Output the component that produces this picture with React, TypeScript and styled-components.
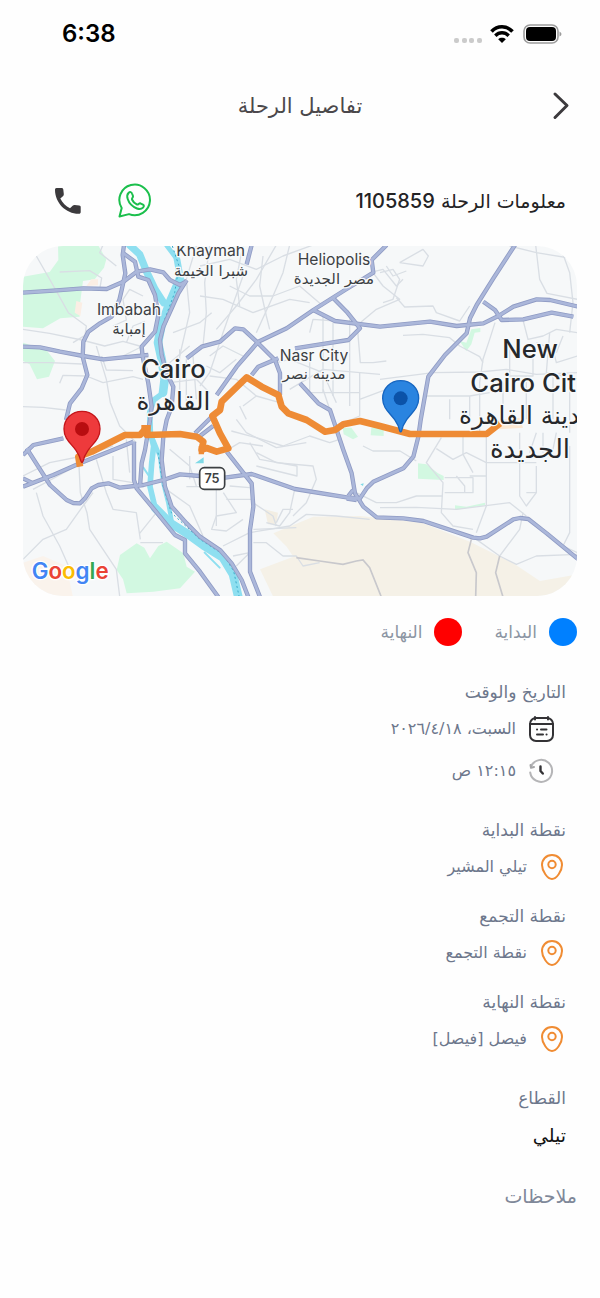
import React from "react";
import styled, { createGlobalStyle } from "styled-components";

const GlobalStyle = createGlobalStyle`
  *, *::before, *::after { box-sizing: border-box; }
  body {
    margin: 0;
    background: #fefefe;
    color: #6d778c;
    font-family: "DejaVu Sans", "Noto Sans", sans-serif;
  }
  h1, h2, p { margin: 0; font-weight: 400; }
`;

const Screen = styled.div`
  padding-bottom: 85px;
`;

const StatusBar = styled.div`
  direction: ltr;
  height: 68px;
  padding: 0 38px 0 62px;
  display: flex;
  align-items: center;
  justify-content: space-between;
`;

const Clock = styled.time`
  font: 600 24px/32px Inter, sans-serif;
  color: #000;
`;

const StatusIcons = styled.div`
  display: flex;
  align-items: center;
  gap: 8px;
`;

const Header = styled.header`
  height: 76px;
  padding: 0 28px;
  display: grid;
  grid-template-columns: 24px 1fr 24px;
  align-items: center;
`;

const BackButton = styled.button`
  width: 24px;
  height: 32px;
  padding: 0;
  border: 0;
  background: none;
  display: flex;
  align-items: center;
  justify-content: center;
`;

const Title = styled.h1`
  font-size: 21px;
  line-height: 32px;
  text-align: center;
  color: #4b484b;
`;

const InfoRow = styled.div`
  margin: 28px 0 16px;
  height: 58px;
  padding: 0 34px 0 50px;
  display: flex;
  align-items: center;
  justify-content: space-between;
`;

const InfoTitle = styled.h2`
  font-size: 19px;
  line-height: 32px;
  color: #232325;
`;

const TripNumber = styled.span`
  font: 500 20px/32px Inter, sans-serif;
`;

const Contacts = styled.div`
  display: flex;
  align-items: center;
  gap: 31px;
`;

const ContactLink = styled.a`
  display: flex;
  width: 36px;
  height: 36px;
  align-items: center;
  justify-content: center;
`;

const MapCard = styled.div`
  margin: 0 23px;
  border-radius: 40px;
  overflow: hidden;
  direction: ltr;
`;

const MapSvg = styled.svg`
  display: block;
  width: 100%;
  height: auto;
  background: #f6f8f9;
`;

const Legend = styled.ul`
  list-style: none;
  margin: 0;
  height: 72px;
  padding: 0 23px;
  display: flex;
  align-items: center;
  gap: 32px;
`;

const LegendItem = styled.li`
  display: flex;
  align-items: center;
  gap: 12px;
  font-size: 17px;
  line-height: 32px;
  color: #8c95a3;
`;

const Dot = styled.span<{ $color: string }>`
  width: 28px;
  height: 28px;
  border-radius: 50%;
  background: ${(p) => p.$color};
`;

const Details = styled.main`
  padding: 8px 34px 0;
  display: flex;
  flex-direction: column;
  gap: 22px;
`;

const Points = styled.div`
  display: flex;
  flex-direction: column;
  gap: 12px;
`;

const Heading = styled.h2`
  font-size: 17px;
  line-height: 32px;
`;

const Row = styled.div<{ $inset?: boolean }>`
  height: 42px;
  padding-right: ${(p) => (p.$inset ? "11px" : "0")};
  display: flex;
  align-items: center;
  gap: 11px;
`;

const RowText = styled.p`
  font-size: 16px;
  line-height: 32px;
`;

const SectorValue = styled.p`
  font-size: 19px;
  line-height: 42px;
  color: #111;
`;

const Notes = styled.h2`
  padding: 24px 23px 0;
  font-size: 19px;
  line-height: 32px;
  color: #7f8899;
`;

const minorRoads = [
  "M40 30L96 128L136 200L190 240L186 268L150 290",
  "M110 78L200 74L236 96L230 130",
  "M0 250L80 262L176 282L245 300L300 286L350 300",
  "M0 350H80L176 354",
  "M110 412L120 388L190 390L240 410L330 392L360 400",
  "M0 482L60 484L128 492",
  "M220 300L250 400L262 470L290 540L340 590",
  "M236 330L250 372L330 374",
  "M270 240L310 222L300 160L320 130L360 150",
  "M280 60L230 20L240 -3",
  "M310 290L330 240L366 226M300 330L360 300",
  "M520 0L490 100L500 200L470 330",
  "M560 0L545 110L550 200L540 300",
  "M450 260L530 230L566 200",
  "M440 350L500 300M440 410L520 400L560 440",
  "M470 310L470 460M490 340V470M510 330L520 460",
  "M531 60L620 40L700 70L780 30L870 -3",
  "M760 -3L700 100L640 180L580 250",
  "M720 30L710 120L730 210L740 250",
  "M531 150L600 160L690 200L800 160L860 170",
  "M660 90L600 260L560 380L531 420",
  "M620 120L680 150L750 150L830 120L900 180",
  "M800 -3L780 80L750 150L700 260",
  "M660 -3L640 100L650 180",
  "M560 330L600 300L660 330M550 360L590 380L640 340",
  "M560 390L640 400L700 450L660 480",
  "M700 450L770 470M650 480L670 520",
  "M760 350L800 340L900 380L940 470",
  "M860 260L870 220L940 225M860 320V440H1010",
  "M900 200V440M930 230V450M980 220V480",
  "M800 430L900 370L1071 385M900 430L930 520",
  "M1004 254L1012 350L1050 350L1090 345",
  "M1010 380V510L940 540M1010 460L1090 430",
  "M1000 240L1060 190L1130 160L1080 120L1050 80",
  "M1040 80L1080 70L1120 120L1140 100M1090 60L1110 90L1150 75",
  "M1071 80L1110 70L1130 100L1110 160L1080 170",
  "M1130 50L1200 10L1216 30L1200 60L1130 50",
  "M1120 155L1145 183L1230 180L1240 200L1310 225L1340 180",
  "M1140 268L1200 265L1280 275L1310 300L1370 332L1380 350",
  "M1460 0L1540 20L1663 40M1538 -3L1550 100L1572 142L1663 160",
  "M1610 -3L1640 80L1650 170L1640 260",
  "M1071 400L1230 380L1370 378L1450 370L1540 385L1663 380",
  "M1416 230L1400 280L1380 340L1370 410V560",
  "M1500 222L1515 280L1560 270L1600 250L1663 260",
  "M1460 290V390H1530V310M1580 260L1570 380L1620 390",
  "M1540 290L1590 310L1600 350L1663 330M1620 270L1600 320",
  "M1200 450H1340L1400 440M1280 460V520M1340 450V520",
  "M1440 410V520M1510 390V520M1590 390V520M1640 390V560",
  "M0 690L80 650L180 630L270 600M30 730L160 660",
  "M40 740L60 810L110 900L150 990",
  "M0 940L60 880L130 850L180 780L210 740",
  "M168 660L172 740L192 800L200 850L240 910L280 970L290 1050",
  "M220 640L250 740L270 790L340 800L352 880",
  "M270 630V700L330 710M310 580L320 680",
  "M440 610L500 660L520 720M430 730L500 780L540 870",
  "M350 862L400 800M352 890L420 890",
  "M490 722H580V840M500 630V700",
  "M540 600L600 620L650 590L720 600",
  "M625 555L700 575L780 600L860 570L920 590L950 580",
  "M640 520L670 560L760 605L850 590",
  "M700 620L760 650L870 660L880 700L850 770L810 810",
  "M680 590L710 640L822 660V690L700 660",
  "M815 730L800 800L770 840L730 830",
  "M601 740L640 800L580 810L566 850L610 855L660 820",
  "M620 720L680 725M610 760L690 760",
  "M600 900L680 860L800 840L850 805L940 810L1040 820",
  "M691 850L820 845M630 930L680 920M640 960L680 920",
  "M691 890L730 890L780 930L820 930L840 960L890 950",
  "M760 830L780 790L810 790M690 770L750 810L760 840",
  "M1000 740L1060 770L1120 770L1180 750H1260",
  "M1020 600L1050 615H1131L1180 645",
  "M1071 785L1180 784L1300 790L1460 770L1510 810",
  "M1255 575L1210 650L1260 710L1255 800L1290 840L1350 850",
  "M1240 608L1290 640L1330 620L1390 650",
  "M1320 570V625L1350 680M1340 690H1390",
  "M1390 565V780L1360 860",
  "M1265 695H1350V740H1265M1300 690L1325 720V740",
  "M1390 650H1540M1490 560V750L1510 780L1540 740V660",
  "M1510 740H1540M1640 600V860L1620 900L1663 920",
  "M1360 880L1430 930L1480 955L1540 930L1663 925",
  "M1500 800L1490 850L1430 930",
  "M1540 560L1520 620M1560 560V620M1600 560L1590 610",
];

const highways = [
  "M0 140L91 134L181 127L251 129L301 107L341 77L381 70L421 79L441 102L471 117L489 107",
  "M303 -3L299 27L307 82L296 132L289 162L266 212L231 232L196 257L181 287L179 332L193 387L176 427L141 472L129 522",
  "M301 22L336 47L346 92L376 102L396 147L406 207",
  "M0 302L51 304L111 317L181 330L241 340L301 334L376 327",
  "M491 102L466 142L446 187L421 242L411 282L416 327L431 382L451 422L446 482L431 522L421 572L416 642L426 722L446 782L491 832L531 872L591 912L626 952L656 1002L676 1053",
  "M406 207L396 257L356 302L359 332L376 412L386 482L381 522L366 612L356 652L351 722",
  "M333 587V702L341 727L391 787L456 867L486 882V922L531 977L586 1053",
  "M0 627L31 597L121 577",
  "M0 722L91 687L171 652L331 587M0 697L31 712",
  "M11 607L46 662L81 717L131 762L151 771L171 772L186 757L206 727L226 717L256 712L291 725L361 717L421 702L471 685L531 690L606 695L686 684L816 729L971 754L1011 757L1031 727L1051 707L1141 667L1171 632L1186 572L1193 522L1216 392L1266 327L1331 262L1341 217L1361 177L1411 97L1476 -3",
  "M491 337L536 302L591 287L636 247L661 250L701 287L756 342L771 382L771 447",
  "M581 447L641 362L706 287L791 247L871 192L966 132L1051 80L1046 42L1091 -3",
  "M871 192L936 225L1071 242L1221 227L1301 240L1381 232L1426 210L1471 182L1541 160L1581 162L1666 182",
  "M931 157L971 197L1011 247L976 282L911 292L816 307",
  "M686 387L706 362L766 337",
  "M831 412L886 472L921 492L931 522L961 612L986 682L996 742L1021 782L1061 814L1141 817L1201 825L1351 875L1371 877L1391 872L1471 820L1491 816L1516 819L1571 862L1666 940",
  "M976 750L990 732M971 758L1001 762",
  "M611 617L686 712L691 782L681 852V977L711 1053",
  "M1381 167L1416 192L1436 222L1501 220L1586 200L1651 212",
  "M686 -3L671 55",
  "M516 562L566 512M531 570L570 540",
];

const route =
  "M171 662L166 632L206 617L306 567L351 567L366 550L371 567L471 564L521 572L541 587L536 612L551 606L581 617L616 607L591 562L568 510L591 492L596 467L671 394L716 422L766 447L776 482L796 502L851 522L906 557L936 552L961 535L1011 525L1071 540L1161 564H1391L1431 532";

const mapLabels: { text: string; x: number; y: number; size: number; arabic?: boolean; start?: boolean }[] = [
  { text: "Khaymah", x: 563, y: 29, size: 47 },
  { text: "شبرا الخيمة", x: 564, y: 90, size: 45, arabic: true },
  { text: "Imbabah", x: 318, y: 207, size: 47 },
  { text: "إمبابة", x: 318, y: 265, size: 45, arabic: true },
  { text: "Cairo", x: 451, y: 395, size: 77 },
  { text: "القاهرة", x: 451, y: 492, size: 74, arabic: true },
  { text: "Heliopolis", x: 933, y: 57, size: 47 },
  { text: "مصر الجديدة", x: 933, y: 114, size: 45, arabic: true },
  { text: "Nasr City", x: 873, y: 344, size: 47 },
  { text: "مدينه نصر", x: 873, y: 400, size: 45, arabic: true },
  { text: "New", x: 1521, y: 337, size: 77 },
  { text: "Cairo City", x: 1342, y: 437, size: 77, start: true },
  { text: "مدينة القاهرة", x: 1308, y: 533, size: 74, arabic: true, start: true },
  { text: "الجديدة", x: 1521, y: 637, size: 78, arabic: true },
];

const MapLabel = styled.text<{ $arabic?: boolean; $large?: boolean }>`
  font-family: ${(p) => (p.$arabic ? '"DejaVu Sans"' : "Inter")}, sans-serif;
  font-weight: ${(p) => (p.$large && !p.$arabic ? 500 : 400)};
  fill: ${(p) => (p.$large ? "#26282b" : "#3c4043")};
  stroke: #f8fafb;
  stroke-width: 8px;
  stroke-linejoin: round;
  paint-order: stroke;
`;

const GoogleMark = styled.text`
  font: 600 67px Inter, sans-serif;
  stroke: #fff;
  stroke-width: 8px;
  paint-order: stroke;
`;

const ShieldText = styled.text`
  font: 600 38px Inter, sans-serif;
  fill: #3c4043;
`;

function MapPin({ x, y, fill, edge, dot }: { x: number; y: number; fill: string; edge: string; dot: string }) {
  return (
    <g transform={`translate(${x} ${y})`}>
      <path
        d="M0 -53C-31 -53 -54 -30 -54 0C-54 30 -33 43 -18 64C-9 77 -5 86 -3 97Q0 104 3 97C5 86 9 77 18 64C33 43 54 30 54 0C54 -30 31 -53 0 -53Z"
        fill={fill}
        stroke={edge}
        strokeWidth="4"
      />
      <circle r="21" fill={dot} />
    </g>
  );
}

function TripMap() {
  return (
    <MapSvg viewBox="0 0 1662 1050" role="img" aria-label="خريطة الرحلة">
      <g fill="#d2f8e1">
        <path d="M105 -3H225L250 40L243 65L215 100L180 105L172 165L170 212L112 217L60 247L0 242V92L80 78L106 42Z" />
        <path d="M0 290L70 312L96 345L78 392L42 400L20 355L0 345Z" />
        <path d="M291 927L341 892L364 905L381 937L406 900L431 887L481 922L491 962L516 977L471 1027L391 1037L311 1042L300 1000L281 972Z" />
        <path d="M959 545L985 545L1005 572L990 580L962 565ZM1045 545H1082V570L1043 568Z" />
        <path d="M1185 652L1210 655L1245 682L1262 690V702L1185 698ZM1296 778L1330 782L1386 770V778L1296 792Z" />
        <path d="M1310 285L1330 290L1345 250L1372 246V258L1355 260L1345 295L1330 315Z" />
      </g>
      <path d="M751 862L871 812L1011 810L1131 822L1201 832L1341 887L1471 952L1551 1005L1663 985V1053H751L711 970L811 932L791 902Z" fill="#f5f1e7" />
      <path d="M0 950L60 930L130 960L150 1053H0Z" fill="#faf3ec" />
      <path d="M725 790L765 800L760 835L735 835Z" fill="#f3eee3" />
      <path d="M1410 525L1490 515L1500 545L1430 550Z" fill="#fce8d2" />
      <path d="M160 165L178 170L172 210L155 200ZM205 100L225 100L225 118L190 120Z" fill="#fbeee4" />

      <g fill="none" stroke="#8edff0" strokeLinecap="round" strokeLinejoin="round">
        <path d="M320 -3L350 25L372 80L396 130L422 170" strokeWidth="22" />
        <path d="M430 -3L462 40" strokeWidth="14" />
        <path d="M462 40L472 95" strokeWidth="20" />
        <path d="M470 100L440 170L415 240L405 290L416 340L425 400L420 440" strokeWidth="26" />
        <path d="M422 440L392 462L380 500L382 560L392 600L386 652L381 722L396 785" strokeWidth="17" />
        <path d="M391 582L411 632L421 712L436 772L446 825" strokeWidth="13" />
        <path d="M396 785L440 830L491 862L541 898L600 935L630 985L646 1053" strokeWidth="26" />
        <path d="M545 920L590 965M361 665L378 690" strokeWidth="6" />
      </g>
      <path d="M448 0L468 60L455 140L425 220L412 270M405 620L420 720L445 800L531 880L600 925L632 975L648 1050" fill="none" stroke="#3aa9c9" strokeWidth="3" strokeDasharray="6 8" />
      <path d="M516 652L542 634V652ZM1012 715L1022 712L1020 720Z" fill="#7fd9e6" />

      <g fill="none" stroke="#d9dee4" strokeWidth="4" strokeLinejoin="round">
        {minorRoads.map((d) => (
          <path key={d} d={d} />
        ))}
      </g>
      <path d="M820 935L890 945L960 955L1000 945L1020 942L1040 965L1075 1053M1345 880L1335 920L1360 980L1358 1053M1430 930L1418 980L1440 1053" fill="none" stroke="#c8c8cc" strokeWidth="5" />

      <g fill="none" strokeLinejoin="round">
        <g stroke="#8f9bc4" strokeWidth="13">
          {highways.map((d) => (
            <path key={d} d={d} />
          ))}
        </g>
        <g stroke="#abb7da" strokeWidth="8">
          {highways.map((d) => (
            <path key={d} d={d} />
          ))}
        </g>
      </g>

      <path d={route} fill="none" stroke="#ee8b35" strokeWidth="20" strokeLinejoin="round" />
      <path d="M535 600V625M355 545H375V575" fill="none" stroke="#ee8b35" strokeWidth="16" />

      <rect x="530" y="665" width="75" height="65" rx="14" fill="#fff" stroke="#3c4043" strokeWidth="5" />
      <ShieldText x="567" y="711" textAnchor="middle">75</ShieldText>

      {mapLabels.map((l) => (
        <MapLabel
          key={l.text}
          x={l.x}
          y={l.y}
          fontSize={l.size}
          textAnchor={l.start ? "start" : "middle"}
          $arabic={l.arabic}
          $large={l.size > 50}
        >
          {l.text}
        </MapLabel>
      ))}

      <MapPin x={177} y={549} fill="#ee3a3c" edge="#c4161a" dot="#b80d10" />
      <MapPin x={1133} y={457} fill="#2a84e0" edge="#1565c0" dot="#0b52a8" />

      <GoogleMark x="26" y="998">
        <tspan fill="#4285f4">G</tspan>
        <tspan fill="#ea4335">o</tspan>
        <tspan fill="#fbbc04">o</tspan>
        <tspan fill="#4285f4">g</tspan>
        <tspan fill="#34a853">l</tspan>
        <tspan fill="#ea4335">e</tspan>
      </GoogleMark>
    </MapSvg>
  );
}

function LocationIcon() {
  return (
    <svg width="28" height="28" viewBox="0 0 28 28" fill="none" stroke="#f08c33" strokeWidth="2" aria-hidden="true">
      <path d="M14 2C8 2 4 6.500 4 12C4 18 9.500 26 14 26C18.500 26 24 18 24 12C24 6.500 20 2 14 2Z" />
      <circle cx="14" cy="11.500" r="3.700" />
    </svg>
  );
}

function CalendarIcon() {
  return (
    <svg width="28" height="28" viewBox="0 0 28 28" fill="none" stroke="#333235" strokeWidth="2" strokeLinecap="round" aria-hidden="true">
      <rect x="3" y="3" width="23" height="23" rx="6" />
      <path d="M3 9H26M8 2V4.500M21 2V4.500" />
      <path d="M14 14.500H19.500M10 19.500H16" />
      <path d="M10 14.500H10.100M19.500 19.500H19.600" />
    </svg>
  );
}

function ClockIcon() {
  return (
    <svg width="28" height="28" viewBox="0 0 28 28" fill="none" strokeLinecap="round" strokeLinejoin="round" aria-hidden="true">
      <path d="M4 9.500A11 11 0 1 1 3.200 15.500" stroke="#b5b5b7" strokeWidth="2" />
      <path d="M3.500 8L4 10.800L7 10" stroke="#a5a5a7" strokeWidth="2" />
      <path d="M13.500 9.500V14L15.800 16.500" stroke="#333235" strokeWidth="2.400" />
    </svg>
  );
}

const points = [
  { heading: "نقطة البداية", value: "تيلي المشير" },
  { heading: "نقطة التجمع", value: "نقطة التجمع" },
  { heading: "نقطة النهاية", value: "فيصل [فيصل]" },
];

export default function App() {
  return (
    <Screen dir="rtl" lang="ar">
      <GlobalStyle />
      <StatusBar>
        <Clock>6:38</Clock>
        <StatusIcons>
          <svg width="28" height="20" viewBox="0 0 28 20" fill="#cbcbcb" aria-hidden="true">
            <rect x="0" y="14" width="5" height="5" rx="2" />
            <rect x="8" y="14" width="5" height="5" rx="2" />
            <rect x="15" y="14" width="5" height="5" rx="2" />
            <rect x="23" y="14" width="5" height="5" rx="2" />
          </svg>
          <svg width="24" height="20" viewBox="0 0 24 20" fill="none" stroke="#000" aria-hidden="true">
            <path d="M1.500 7.500C7.500 1.200 16.500 1.200 22.500 7.500" strokeWidth="3.600" />
            <path d="M5.300 11.700C9.200 7.800 14.800 7.800 18.700 11.700" strokeWidth="3.400" />
            <path d="M12 19L8.200 15.200C10.300 13.400 13.700 13.400 15.800 15.200Z" fill="#000" stroke="none" />
          </svg>
          <svg width="40" height="20" viewBox="0 0 40 20" aria-hidden="true">
            <rect x="2" y="1" width="34" height="18" rx="6" fill="none" stroke="#9c9c9c" strokeWidth="1.600" />
            <rect x="4" y="3" width="30" height="14" rx="4" fill="#000" />
            <path d="M37.500 7.500Q39.500 8.500 39.500 10Q39.500 11.500 37.500 12.500Z" fill="#9c9c9c" />
          </svg>
        </StatusIcons>
      </StatusBar>

      <Header>
        <BackButton type="button" aria-label="رجوع">
          <svg width="20" height="30" viewBox="0 0 20 30" fill="none" stroke="#3c3a3d" strokeWidth="3" strokeLinecap="round" strokeLinejoin="round">
            <path d="M5 3L17 14.500L5 26.500" />
          </svg>
        </BackButton>
        <Title>تفاصيل الرحلة</Title>
      </Header>

      <InfoRow>
        <InfoTitle>
          معلومات الرحلة <TripNumber>1105859</TripNumber>
        </InfoTitle>
        <Contacts>
          <ContactLink href="#whatsapp" aria-label="واتساب">
            <svg width="36" height="36" viewBox="0 0 36 36" fill="none" stroke="#1bbf4c" strokeWidth="2" strokeLinejoin="round">
              <path d="M2.500 33.500L4.700 25A15.300 15.300 0 1 1 12 31.100Z" />
              <path d="M11.500 10C13 8.500 14.500 9 15 10.500L16 13C16.400 14.200 14.500 15.300 15 16.500C16 18.800 18 20.700 20 21.500C21.300 22 22 19.800 23.300 20.300L26 21.600C27.300 22.300 27 23.500 26 24.600C24.500 26.200 22.500 26.500 20 25.500C15.500 23.700 12 20 10.700 16C9.900 13.500 10 11.500 11.500 10Z" />
            </svg>
          </ContactLink>
          <ContactLink href="#call" aria-label="اتصال">
            <svg width="34" height="34" viewBox="0 0 34 34" fill="#3c3a3d">
              <path d="M5.500 4H10.500C11.600 4 12.200 4.600 12.300 5.600L12.800 10C12.900 10.800 12.700 11.400 12.200 11.900L9.300 14.600C11.400 18.800 14.800 22.200 19 24.300L21.900 21.500C22.400 21 23 20.800 23.700 20.900L28.200 21.500C29.200 21.600 29.700 22.200 29.700 23.200V28C29.700 29.200 29 29.800 28 29.800C15 30 4 19 4 5.800C4 4.700 4.500 4 5.500 4Z" />
            </svg>
          </ContactLink>
        </Contacts>
      </InfoRow>

      <MapCard>
        <TripMap />
      </MapCard>

      <Legend>
        <LegendItem>
          <Dot $color="#0080ff" />
          البداية
        </LegendItem>
        <LegendItem>
          <Dot $color="#ff0000" />
          النهاية
        </LegendItem>
      </Legend>

      <Details>
        <section>
          <Heading>التاريخ والوقت</Heading>
          <Row $inset>
            <CalendarIcon />
            <RowText>السبت، ٢٠٢٦/٤/١٨</RowText>
          </Row>
          <Row $inset>
            <ClockIcon />
            <RowText>١٢:١٥ ص</RowText>
          </Row>
        </section>
        <Points>
          {points.map((p) => (
            <section key={p.heading}>
              <Heading>{p.heading}</Heading>
              <Row>
                <LocationIcon />
                <RowText>{p.value}</RowText>
              </Row>
            </section>
          ))}
        </Points>
        <section>
          <Heading>القطاع</Heading>
          <SectorValue>تيلي</SectorValue>
        </section>
      </Details>
      <Notes>ملاحظات</Notes>
    </Screen>
  );
}
